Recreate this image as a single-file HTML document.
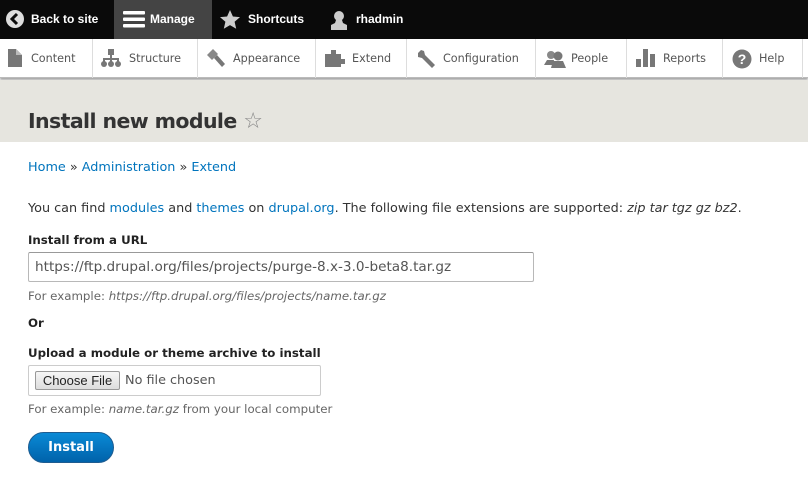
<!DOCTYPE html>
<html><head><style>
*{box-sizing:border-box;margin:0;padding:0}
body{width:808px;height:481px;overflow:hidden;background:#fff;font-family:"DejaVu Sans","Liberation Sans",sans-serif;color:#333;position:relative}
.bar{position:absolute;top:0;left:0;width:808px;height:39px;background:#0a0a0a;color:#fff;font-weight:bold;font-size:12px;font-family:"Liberation Sans",sans-serif}
.bar div{position:absolute;top:0;height:39px;line-height:39px}
.tray{position:absolute;top:39px;left:0;width:808px;height:39px;background:#fff;box-shadow:0 2px 2px rgba(0,0,0,.35);border-bottom:1px solid #bbb;font-size:11.2px;color:#555}
.tray div{position:absolute;top:0;height:39px;line-height:39px;border-right:1px solid #ddd}
.tray svg,.bar svg{position:absolute;top:10px}
.hdr{position:absolute;top:80px;left:0;width:808px;height:62px;background:#e6e5df}
h1{position:absolute;left:28px;top:109px;font-size:20.5px;font-weight:bold;color:#333;letter-spacing:-0.6px}
a{color:#0074bd;text-decoration:none}
.t{position:absolute;left:28px;font-size:12.8px;white-space:nowrap}
b{font-weight:bold;color:#222;font-size:11.8px}
.in{position:absolute;border:1px solid #b8b8b8;border-top-color:#999;border-radius:2px;background:#fff}
.btn{position:absolute;left:28px;top:432px;width:86px;height:31px;border-radius:16px;background:linear-gradient(#0a8ad6,#0062aa);border:1px solid #1e5c90;color:#fff;font-weight:bold;font-size:13px;text-align:center;line-height:29px}
</style></head><body>
<div class="bar">
<div style="left:0;width:114px"><svg width="18" height="18" style="left:6px" viewBox="0 0 18 18"><circle cx="9" cy="9" r="9" fill="#ddd"/><path d="M11 4L6 9l5 5" stroke="#0a0a0a" stroke-width="3" fill="none"/></svg><span style="position:absolute;left:31px">Back to site</span></div>
<div style="left:114px;width:98px;background:#444"><svg width="22" height="18" style="left:9px" viewBox="0 0 22 18"><rect y="1" width="22" height="3.5" rx="1" fill="#fff"/><rect y="7.5" width="22" height="3.5" rx="1" fill="#fff"/><rect y="14" width="22" height="3.5" rx="1" fill="#fff"/></svg><span style="position:absolute;left:36px">Manage</span></div>
<div style="left:212px;width:105px"><svg width="20" height="20" style="left:8px" viewBox="0 0 20 20"><path d="M10 0l2.9 6.5 7.1.6-5.4 4.7 1.6 7L10 15.1 3.8 18.8l1.6-7L0 7.1l7.1-.6z" fill="#ccc"/></svg><span style="position:absolute;left:36px">Shortcuts</span></div>
<div style="left:317px;width:100px"><svg width="20" height="20" style="left:12px" viewBox="0 0 20 20"><circle cx="10" cy="6" r="5" fill="#ccc"/><path d="M7 10h6l1 3 4 2v5H2v-5l4-2z" fill="#ccc"/></svg><span style="position:absolute;left:39px">rhadmin</span></div>
</div>
<div class="tray">
<div style="left:0;width:93px"><svg width="14" height="18" style="left:8px" viewBox="0 0 14 18"><path d="M0 0h8l6 6v12H0z" fill="#777"/><path d="M8 0v6h6" fill="#bbb"/></svg><span style="position:absolute;left:31px">Content</span></div>
<div style="left:93px;width:105px"><svg width="20" height="18" style="left:8px" viewBox="0 0 20 18"><rect x="7" y="0" width="6" height="6" fill="#777"/><path d="M10 6v4M3 14v-4h14v4M10 10v4" stroke="#777" stroke-width="2" fill="none"/><circle cx="3" cy="15" r="3" fill="#777"/><circle cx="10" cy="15" r="3" fill="#777"/><circle cx="17" cy="15" r="3" fill="#777"/></svg><span style="position:absolute;left:36px">Structure</span></div>
<div style="left:198px;width:118px"><svg width="20" height="18" style="left:8px" viewBox="0 0 20 18"><path d="M1 6l6-6 5 5-6 6z" fill="#888"/><path d="M8 9l3-3 8 9-3 3z" fill="#777"/></svg><span style="position:absolute;left:35px">Appearance</span></div>
<div style="left:316px;width:91px"><svg width="22" height="18" style="left:9px" viewBox="0 0 22 18"><path d="M0 5h6V1h5v4h5v5h4v5h-4v3H0z" fill="#777"/></svg><span style="position:absolute;left:36px">Extend</span></div>
<div style="left:407px;width:129px"><svg width="20" height="20" style="left:9px" viewBox="0 0 20 20"><path d="M2 4l3-3 3 1 1 4 10 10-3 3L6 9 2 8z" fill="#777"/></svg><span style="position:absolute;left:36px">Configuration</span></div>
<div style="left:536px;width:91px"><svg width="22" height="20" style="left:8px" viewBox="0 0 22 20"><circle cx="7" cy="6" r="4" fill="#888"/><circle cx="14" cy="7" r="4.5" fill="#777"/><path d="M0 16l3-5h7l-1 5zM7 19l2-7h10l3 7z" fill="#777"/></svg><span style="position:absolute;left:35px">People</span></div>
<div style="left:627px;width:96px"><svg width="20" height="18" style="left:9px" viewBox="0 0 20 18"><rect x="0" y="10" width="5" height="8" fill="#777"/><rect x="7" y="0" width="5" height="18" fill="#777"/><rect x="14" y="5" width="5" height="13" fill="#777"/></svg><span style="position:absolute;left:36px">Reports</span></div>
<div style="left:723px;width:80px"><svg width="20" height="20" style="left:9px" viewBox="0 0 20 20"><circle cx="10" cy="10" r="9.5" fill="#777"/><text x="10" y="15" font-size="14" font-weight="bold" text-anchor="middle" fill="#fff" font-family="Liberation Sans">?</text></svg><span style="position:absolute;left:36px">Help</span></div>
</div>
<div class="hdr"></div>
<h1>Install new module <span style="font-weight:normal;color:#888;font-size:22px">☆</span></h1>
<div class="t" style="top:160px"><a>Home</a> » <a>Administration</a> » <a>Extend</a></div>
<div class="t" style="top:201px">You can find <a>modules</a> and <a>themes</a> on <a>drupal.org</a>. The following file extensions are supported: <i>zip tar tgz gz bz2</i>.</div>
<div class="t" style="top:233px"><b>Install from a URL</b></div>
<div class="in" style="left:28px;top:252px;width:506px;height:30px"><span style="position:absolute;left:6px;top:6px;font-size:13.6px;color:#555;white-space:nowrap">https://ftp.drupal.org/files/projects/purge-8.x-3.0-beta8.tar.gz</span></div>
<div class="t" style="top:289px;font-size:11.8px;color:#666">For example: <i>https://ftp.drupal.org/files/projects/name.tar.gz</i></div>
<div class="t" style="top:316px"><b>Or</b></div>
<div class="t" style="top:346px"><b>Upload a module or theme archive to install</b></div>
<div class="in" style="left:28px;top:365px;width:293px;height:31px;border-color:#ccc"><span style="position:absolute;left:6px;top:5px;width:85px;height:19px;border:1px solid #999;border-radius:2px;background:linear-gradient(#f6f6f6,#ddd);font-family:'Liberation Sans',sans-serif;font-size:13px;text-align:center;line-height:17px;color:#222">Choose File</span><span style="position:absolute;left:96px;top:7px;font-size:12.8px;color:#555">No file chosen</span></div>
<div class="t" style="top:402px;font-size:11.8px;color:#666">For example: <i>name.tar.gz</i> from your local computer</div>
<div class="btn">Install</div>
</body></html>
